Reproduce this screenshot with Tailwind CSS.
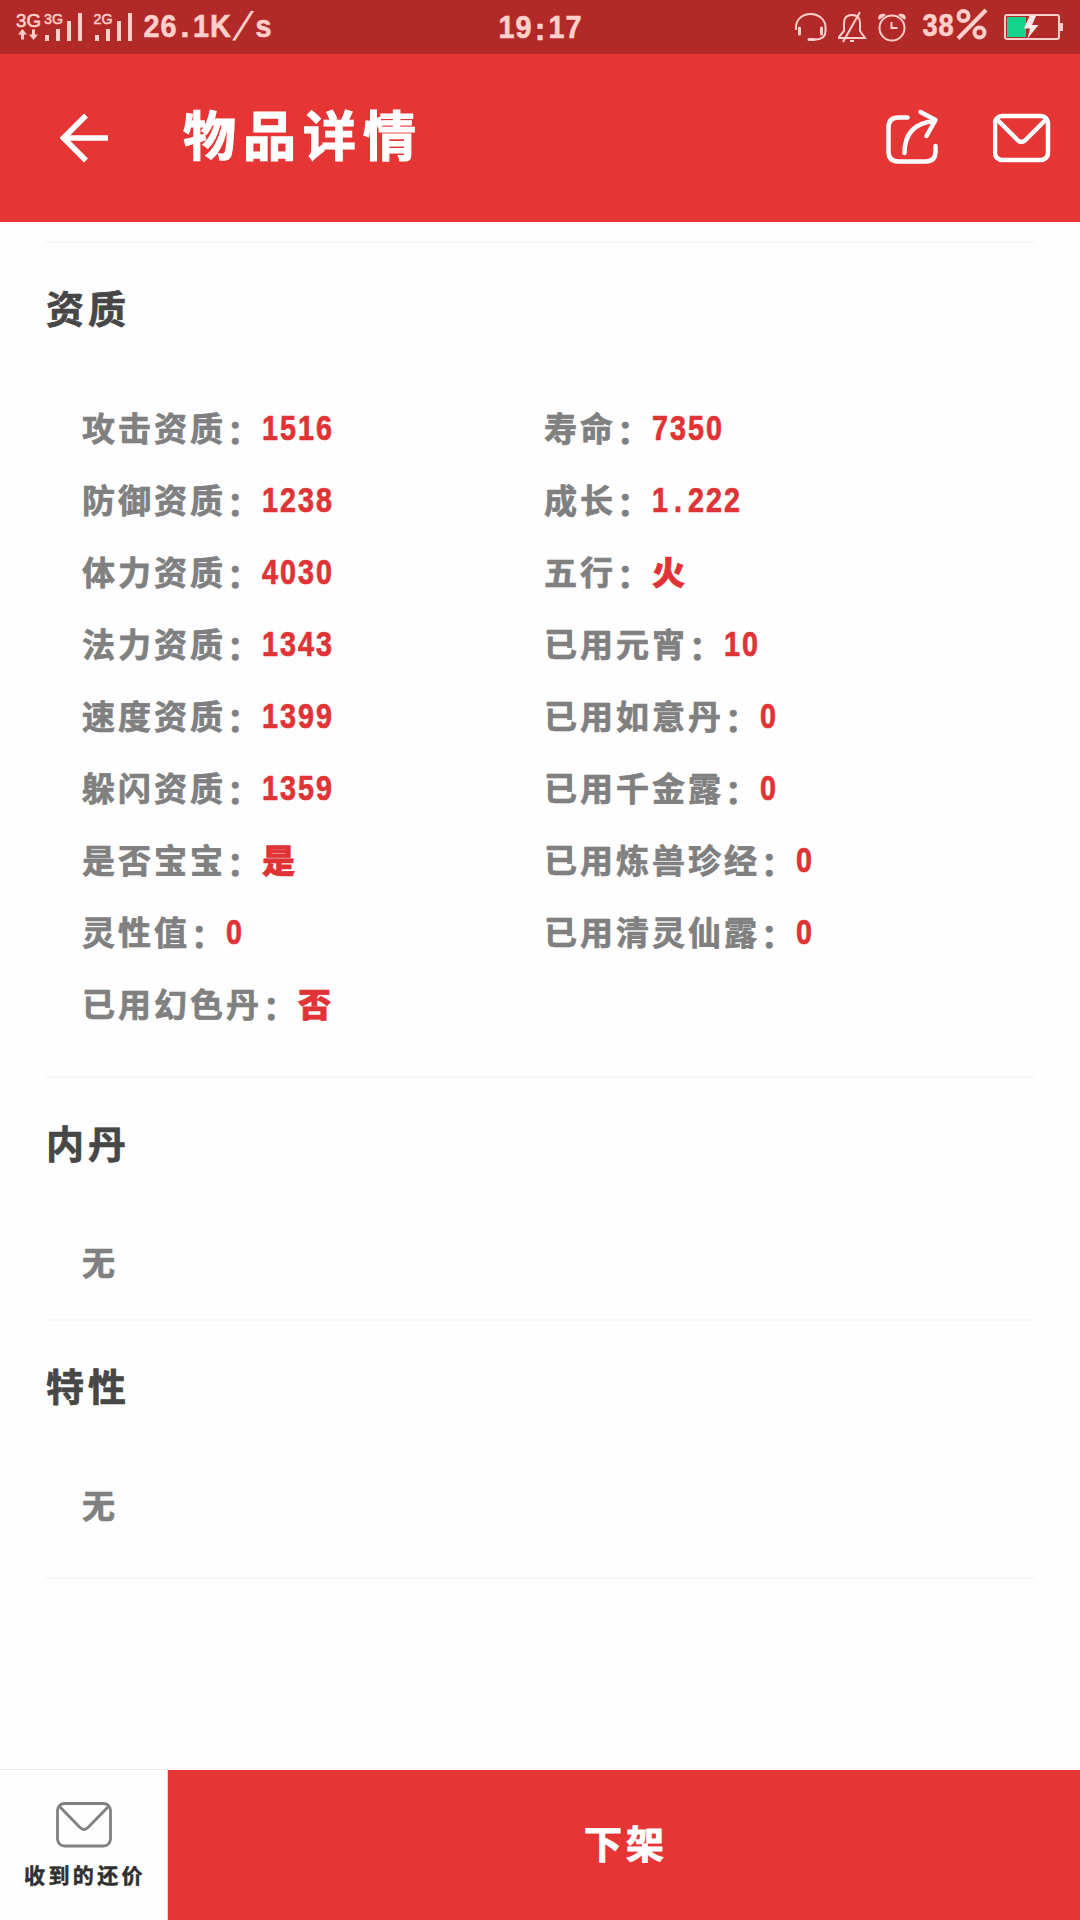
<!DOCTYPE html>
<html lang="zh-CN">
<head>
    <meta charset="UTF-8">
    <meta name="viewport" content="width=device-width, initial-scale=1.0">
    <title>物品详情</title>
    <script src="https://cdn.jsdelivr.net/npm/@tailwindcss/browser@4"></script>
</head>
<body class="bg-[#fefefe] font-['Noto_Sans_CJK_SC',sans-serif] font-bold">
    <div class="w-[1080px] h-[1920px] flex flex-col overflow-hidden">
        <!-- Status Bar -->
        <div class="h-[54px] shrink-0 bg-[#b22a28] text-[#ffcfcc] grid grid-cols-3 items-center font-['Liberation_Sans',sans-serif] [-webkit-text-stroke-width:0.6px]">
            <div class="flex items-center h-[54px]">
                <svg class="w-[136px] h-[54px] shrink-0" viewBox="0 0 136 54" fill="currentColor" font-family="Liberation Sans" font-weight="400">
                    <text x="16" y="27" font-size="19" textLength="25" lengthAdjust="spacingAndGlyphs" stroke="currentColor" stroke-width=".6">3G</text>
                    <path d="M22.500 29l4.500 5.500h-3v5h-3v-5h-3zM33.500 40l-4.500-5.500h3v-5h3v5h3z"/>
                    <text x="44" y="24" font-size="15" textLength="19" lengthAdjust="spacingAndGlyphs" stroke="currentColor" stroke-width=".5">3G</text>
                    <path d="M45 35h4v6h-4zM56 29h4v12h-4zM67 21h4v20h-4zM78 13h4v28h-4z"/>
                    <text x="93.500" y="24" font-size="15" textLength="19" lengthAdjust="spacingAndGlyphs" stroke="currentColor" stroke-width=".5">2G</text>
                    <path d="M95 35h4v6h-4zM106 29h4v12h-4zM117 21h4v20h-4zM128 13h4v28h-4z"/>
                </svg>
                <div class="flex items-center text-[32px] leading-none pl-[7px] pb-[3px]">
                    <span class="w-[17px] flex justify-center scale-x-90">2</span><span class="w-[17px] flex justify-center scale-x-90">6</span><span class="w-[16px] flex justify-center">.</span><span class="w-[16px] flex justify-center scale-x-90">1</span><span class="w-[23px] flex justify-center scale-x-90">K</span><span class="w-[22px] flex justify-center text-[40px] font-normal [-webkit-text-stroke-width:0] -skew-x-20">/</span><span class="w-[19px] flex justify-center scale-x-90">s</span>
                </div>
            </div>
            <div class="flex justify-center text-[32px] leading-none pb-px">
                <span class="w-[17px] flex justify-center scale-x-90">1</span><span class="w-[17px] flex justify-center scale-x-90">9</span><span class="w-[16px] flex justify-center translate-y-[2px]">:</span><span class="w-[17px] flex justify-center scale-x-90">1</span><span class="w-[17px] flex justify-center scale-x-90">7</span>
            </div>
            <div class="flex items-center h-[54px] pl-[60px]">
                <svg class="w-[142px] h-[54px] shrink-0" viewBox="0 0 142 54" fill="none" stroke="currentColor" stroke-width="2">
                    <path d="M16 30v-3c0-7 6-13 14.500-13s15 6 15 13v4c0 5-3 8-9 8.500h-7"/>
                    <path d="M19.500 28v6M41.500 28v6M29 39.500h5" stroke-width="3" stroke-linecap="round"/>
                    <path d="M59 37l5-6v-8c0-5 3-8 8-8s8 3 8 8v8l5 7H59zM80 12L63 42M70 41h4"/>
                    <circle cx="112" cy="28" r="12.500"/>
                    <path d="M111.500 22v6h6"/>
                    <path d="M99 20c-3-5 4-8 7-5zM125 20c3-5-4-8-7-5z" fill="currentColor" stroke="none"/>
                </svg>
                <div class="w-[32px] flex text-[32px] leading-none pb-[4px]">
                    <span class="w-[16px] flex justify-center scale-x-85">3</span><span class="w-[16px] flex justify-center scale-x-85">8</span>
                </div>
                <svg class="w-[42px] h-[54px] shrink-0" viewBox="2 0 42 54" fill="none" stroke="currentColor" stroke-width="4">
                    <circle cx="11.500" cy="16" r="5"/><circle cx="27.500" cy="32.500" r="5"/><path d="M34 10L6 38.500"/>
                </svg>
                <svg class="w-[84px] h-[54px] shrink-0" viewBox="20.500 0 84 54">
                    <rect x="29.500" y="15" width="54" height="24" rx="2" fill="none" stroke="currentColor" stroke-width="2"/>
                    <path d="M31.500 17h19v20h-19z" fill="#15d38a"/>
                    <path d="M54 16L48.500 28.500h6L52 38.500 63 25h-6.500l4-9z" fill="#ffebe9"/>
                    <path d="M84.500 23h3v8h-3z" fill="currentColor"/>
                </svg>
            </div>
        </div>

        <!-- Header -->
        <header class="h-[168px] shrink-0 bg-[#e53535] text-white flex items-start pt-[54px] pl-[60px] pr-[29px]">
            <svg class="w-[48px] h-[60px]" viewBox="0 0 48 60" fill="none" stroke="currentColor" stroke-width="5.500">
                <path d="M26 7.500L3.500 30 26 52.500M3.500 30H48"/>
            </svg>
            <h1 class="-mt-[3px] ml-[75px] text-[53px] leading-[56px] tracking-[7px] [-webkit-text-stroke:1.2px_white]">物品详情</h1>
            <div class="ml-auto flex gap-[54px]">
                <svg class="w-[53px] h-[60px]" viewBox="0.500 0 53 60" fill="none" stroke="currentColor" stroke-width="4.500" stroke-linecap="round">
                    <path d="M22 9.500H13Q3 9.500 3 19.500v24Q3 53.500 13 53.500H40Q50 53.500 50 43.500V38"/>
                    <path d="M19 45C19 27 28 15 49 13M35 4l15 8-9 16" stroke-linejoin="round"/>
                </svg>
                <svg class="w-[58px] h-[60px]" viewBox="0.500 0 58 60" fill="none" stroke="currentColor" stroke-width="4.500">
                    <rect x="2.500" y="8" width="53" height="44" rx="7"/>
                    <path d="M4 11l21 21q4 4 8 0l21-21"/>
                </svg>
            </div>
        </header>

        <!-- Main Content -->
        <main class="flex-1 px-[45px] pt-[19px] text-[33px] tracking-[3px] text-[#808080] [-webkit-text-stroke-width:0.7px]">
            <section class="h-[835px] border-t-2 border-[#f7f7f7] pt-[36px]">
                <h2 class="pl-px text-[38px] leading-[56px] tracking-[4px] text-[#474747]">资质</h2>
                <div class="mt-[56px] pl-[37px] grid grid-cols-[462px_1fr] leading-[72px]">
                    <!-- Left column -->
                    <div>
                        <p class="flex h-[72px]">攻击资质<i class="not-italic translate-x-px translate-y-[3px]">：</i><b class="text-[#e03336] font-['Liberation_Sans',sans-serif] text-[35px] tracking-[2.500px] origin-left scale-x-82 translate-y-px">1516</b></p>
                        <p class="flex h-[72px]">防御资质<i class="not-italic translate-x-px translate-y-[3px]">：</i><b class="text-[#e03336] font-['Liberation_Sans',sans-serif] text-[35px] tracking-[2.500px] origin-left scale-x-82 translate-y-px">1238</b></p>
                        <p class="flex h-[72px]">体力资质<i class="not-italic translate-x-px translate-y-[3px]">：</i><b class="text-[#e03336] font-['Liberation_Sans',sans-serif] text-[35px] tracking-[2.500px] origin-left scale-x-82 translate-y-px">4030</b></p>
                        <p class="flex h-[72px]">法力资质<i class="not-italic translate-x-px translate-y-[3px]">：</i><b class="text-[#e03336] font-['Liberation_Sans',sans-serif] text-[35px] tracking-[2.500px] origin-left scale-x-82 translate-y-px">1343</b></p>
                        <p class="flex h-[72px]">速度资质<i class="not-italic translate-x-px translate-y-[3px]">：</i><b class="text-[#e03336] font-['Liberation_Sans',sans-serif] text-[35px] tracking-[2.500px] origin-left scale-x-82 translate-y-px">1399</b></p>
                        <p class="flex h-[72px]">躲闪资质<i class="not-italic translate-x-px translate-y-[3px]">：</i><b class="text-[#e03336] font-['Liberation_Sans',sans-serif] text-[35px] tracking-[2.500px] origin-left scale-x-82 translate-y-px">1359</b></p>
                        <p class="flex h-[72px]">是否宝宝<i class="not-italic translate-x-px translate-y-[3px]">：</i><b class="text-[#e03336]">是</b></p>
                        <p class="flex h-[72px]">灵性值<i class="not-italic translate-x-px translate-y-[3px]">：</i><b class="text-[#e03336] font-['Liberation_Sans',sans-serif] text-[35px] tracking-[2.500px] origin-left scale-x-82 translate-y-px">0</b></p>
                        <p class="flex h-[72px]">已用幻色丹<i class="not-italic translate-x-px translate-y-[3px]">：</i><b class="text-[#e03336]">否</b></p>
                    </div>
                    <!-- Right column -->
                    <div>
                        <p class="flex h-[72px]">寿命<i class="not-italic translate-x-px translate-y-[3px]">：</i><b class="text-[#e03336] font-['Liberation_Sans',sans-serif] text-[35px] tracking-[2.500px] origin-left scale-x-82 translate-y-px">7350</b></p>
                        <p class="flex h-[72px]">成长<i class="not-italic translate-x-px translate-y-[3px]">：</i><b class="text-[#e03336] font-['Liberation_Sans',sans-serif] text-[35px] tracking-[2.500px] origin-left scale-x-82 translate-y-px">1<span class="inline-block w-[22px] text-center">.</span>222</b></p>
                        <p class="flex h-[72px]">五行<i class="not-italic translate-x-px translate-y-[3px]">：</i><b class="text-[#e03336]">火</b></p>
                        <p class="flex h-[72px]">已用元宵<i class="not-italic translate-x-px translate-y-[3px]">：</i><b class="text-[#e03336] font-['Liberation_Sans',sans-serif] text-[35px] tracking-[2.500px] origin-left scale-x-82 translate-y-px">10</b></p>
                        <p class="flex h-[72px]">已用如意丹<i class="not-italic translate-x-px translate-y-[3px]">：</i><b class="text-[#e03336] font-['Liberation_Sans',sans-serif] text-[35px] tracking-[2.500px] origin-left scale-x-82 translate-y-px">0</b></p>
                        <p class="flex h-[72px]">已用千金露<i class="not-italic translate-x-px translate-y-[3px]">：</i><b class="text-[#e03336] font-['Liberation_Sans',sans-serif] text-[35px] tracking-[2.500px] origin-left scale-x-82 translate-y-px">0</b></p>
                        <p class="flex h-[72px]">已用炼兽珍经<i class="not-italic translate-x-px translate-y-[3px]">：</i><b class="text-[#e03336] font-['Liberation_Sans',sans-serif] text-[35px] tracking-[2.500px] origin-left scale-x-82 translate-y-px">0</b></p>
                        <p class="flex h-[72px]">已用清灵仙露<i class="not-italic translate-x-px translate-y-[3px]">：</i><b class="text-[#e03336] font-['Liberation_Sans',sans-serif] text-[35px] tracking-[2.500px] origin-left scale-x-82 translate-y-px">0</b></p>
                    </div>
                </div>
            </section>

            <section class="h-[243px] border-t-2 border-[#f7f7f7] pt-[36px]">
                <h2 class="pl-px text-[38px] leading-[56px] tracking-[4px] text-[#474747]">内丹</h2>
                <p class="mt-[55px] pl-[37px] leading-[72px]">无</p>
            </section>

            <section class="h-[260px] border-y-2 border-[#f7f7f7] pt-[36px]">
                <h2 class="pl-px text-[38px] leading-[56px] tracking-[4px] text-[#474747]">特性</h2>
                <p class="mt-[55px] pl-[37px] leading-[72px]">无</p>
            </section>
        </main>

        <!-- Bottom Bar -->
        <footer class="h-[151px] shrink-0 flex">
            <button class="w-[168px] border-t border-[#e6eaec] border-r border-r-[#d8dde0] flex flex-col items-center pt-[32px] text-[#303030]">
                <svg class="w-[56px] h-[46px]" viewBox="0 0 56 46" fill="none" stroke="#808080" stroke-width="2.800">
                    <rect x="1.500" y="1.500" width="53" height="42.500" rx="7"/>
                    <path d="M3.500 4.500l20.500 21q4 4 8 0l20.500-21"/>
                </svg>
                <span class="mt-[12px] text-[21px] leading-[28px] tracking-[3.400px] pl-[3px] [-webkit-text-stroke:0.5px_#303030]">收到的还价</span>
            </button>
            <button class="flex-1 mt-px pb-[8px] pl-[4px] bg-[#e53535] text-white text-[38px] tracking-[4px] [-webkit-text-stroke:1px_white]">下架</button>
        </footer>
    </div>
</body>
</html>
